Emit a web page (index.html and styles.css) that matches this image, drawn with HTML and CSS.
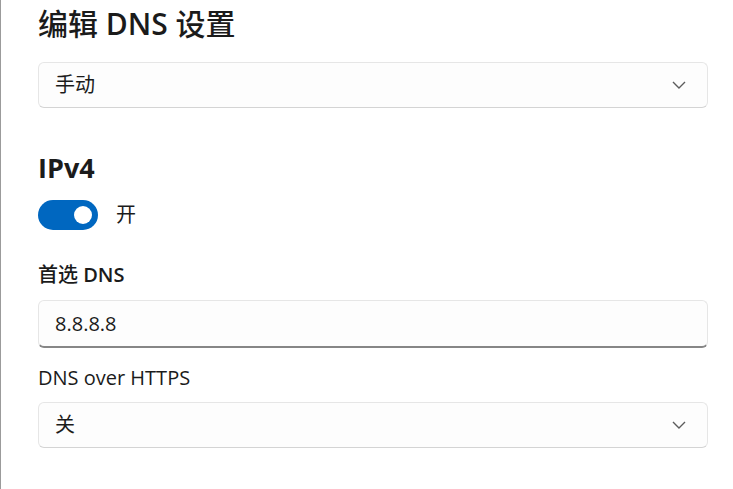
FILE: index.html
```html
<!DOCTYPE html>
<html lang="zh-CN">
<head>
<meta charset="utf-8">
<title>编辑 DNS 设置</title>
<link rel="stylesheet" href="styles.css">
</head>
<body>
<div class="page">
  <h1 class="title">编辑 <span class="latin">DNS</span> 设置</h1>
  <div class="select first">
    <span class="value">手动</span>
    <svg class="chev" width="14" height="8" viewBox="0 0 14 8"><path d="M1 1 L7 7 L13 1" fill="none" stroke="#5c5c5c" stroke-width="1.4"/></svg>
  </div>
  <h2 class="section">IPv4</h2>
  <div class="toggle-row">
    <div class="toggle"><div class="knob"></div></div>
    <span class="toggle-label">开</span>
  </div>
  <div class="label strong">首选 <span class="latin">DNS</span></div>
  <div class="textbox"><span class="value">8.8.8.8</span></div>
  <div class="label">DNS over HTTPS</div>
  <div class="select">
    <span class="value">关</span>
    <svg class="chev" width="14" height="8" viewBox="0 0 14 8"><path d="M1 1 L7 7 L13 1" fill="none" stroke="#5c5c5c" stroke-width="1.4"/></svg>
  </div>
</div>
</body>
</html>
```
FILE: styles.css
```css
html, body {
  margin: 0;
  padding: 0;
  background: #ffffff;
}
.page {
  box-sizing: border-box;
  height: 489px;
  border-left: 1px solid #9b9b9b;
  padding: 0 25px 0 37px;
  font-family: "Open Sans", "Noto Sans CJK SC", sans-serif;
  color: #1b1b1b;
  display: flex;
  flex-direction: column;
}
.title {
  margin: 4px 0 0 0;
  font-size: 30px;
  line-height: 40px;
  font-weight: 500;
  font-family: "Open Sans", "Noto Sans CJK SC", sans-serif;
}
.latin {
  font-weight: 600;
}
.select, .textbox {
  box-sizing: border-box;
  height: 46px;
  background: #fdfdfd;
  border: 1px solid #e6e6e6;
  border-bottom-color: #d4d4d4;
  border-radius: 6px;
  display: flex;
  align-items: center;
  justify-content: space-between;
  padding: 0 21px 0 16px;
}
.select.first {
  margin-top: 18px;
}
.value {
  font-size: 20px;
  line-height: 28px;
}
.chev {
  display: block;
}
.section {
  margin: 40px 0 0 0;
  font-size: 27px;
  line-height: 40px;
  font-weight: 700;
}
.toggle-row {
  margin-top: 12px;
  display: flex;
  align-items: center;
  gap: 18px;
}
.toggle {
  width: 60px;
  height: 30px;
  border-radius: 15px;
  background: #0067c0;
  display: flex;
  align-items: center;
  justify-content: flex-end;
  padding-right: 6px;
  box-sizing: border-box;
}
.knob {
  width: 18px;
  height: 18px;
  border-radius: 50%;
  background: #ffffff;
}
.toggle-label {
  font-size: 20px;
  line-height: 28px;
}
.label {
  font-size: 20px;
  line-height: 28px;
  margin-top: 31px;
}
.label.strong {
  font-weight: 500;
}
.textbox {
  margin-top: 11px;
  height: 48px;
  border-bottom: 2px solid #868686;
}
.label + .select {
  margin-top: 10px;
}
.textbox + .label {
  margin-top: 16px;
}
```
